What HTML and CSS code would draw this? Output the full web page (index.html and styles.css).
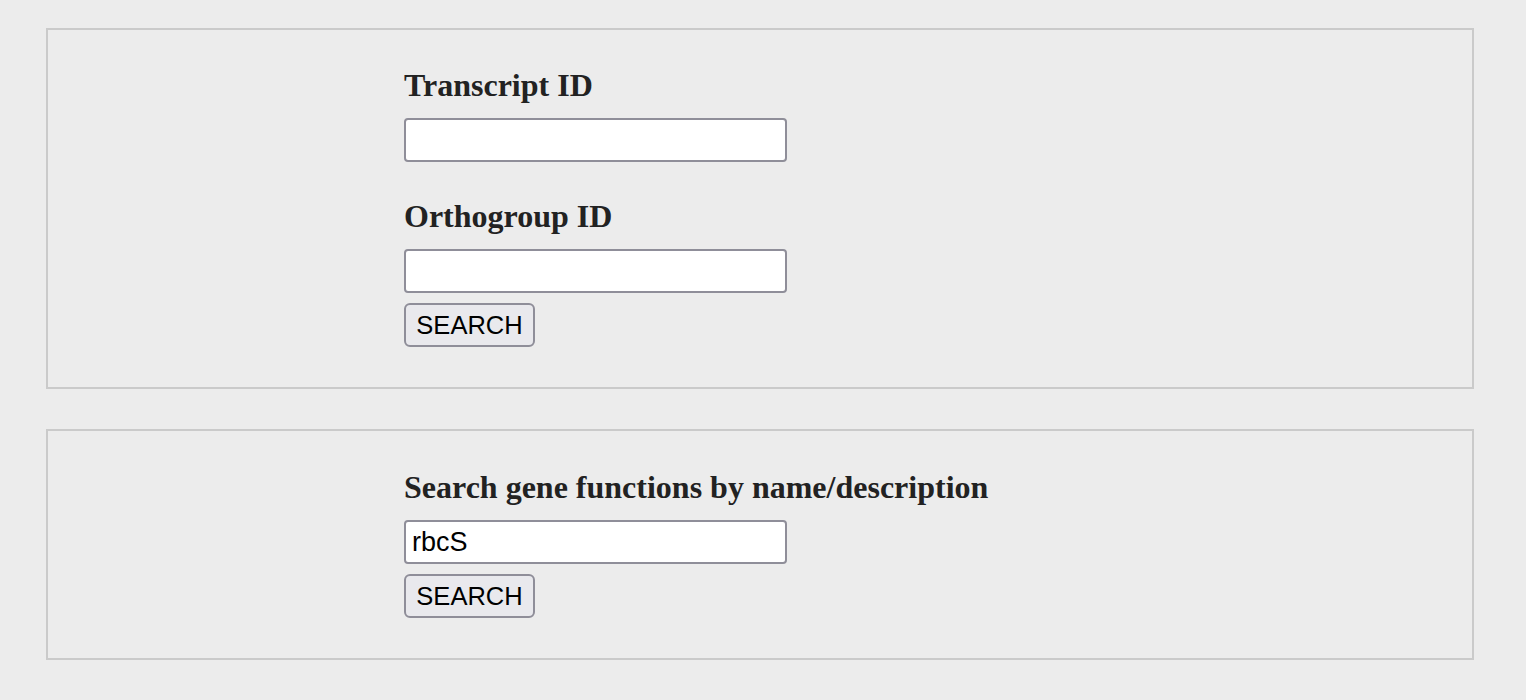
FILE: index.html
```html
<!DOCTYPE html>
<html>
<head>
<meta charset="utf-8">
<link rel="stylesheet" href="styles.css">
</head>
<body>
<form class="panel panel-ids">
  <div class="field">
    <label class="label" for="tid">Transcript ID</label>
    <input class="text-input" id="tid" type="text">
  </div>
  <div class="field">
    <label class="label" for="oid">Orthogroup ID</label>
    <input class="text-input" id="oid" type="text">
  </div>
  <button class="btn" type="button">SEARCH</button>
</form>
<form class="panel panel-func">
  <div class="field">
    <label class="label" for="q">Search gene functions by name/description</label>
    <input class="text-input" id="q" type="text" value="rbcS">
  </div>
  <button class="btn" type="button">SEARCH</button>
</form>
</body>
</html>
```
FILE: styles.css
```css
html, body {
  background: #ececec;
}
body {
  margin: 28px 0 0 46px;
  width: 1428px;
  font-family: "Liberation Serif", "Times New Roman", serif;
  color: #222222;
}
.panel {
  box-sizing: border-box;
  width: 1428px;
  border: 2px solid #cacaca;
  padding: 37px 0 40px 356px;
  margin: 0 0 40px 0;
  display: flex;
  flex-direction: column;
  align-items: flex-start;
}
.panel-func {
  padding-top: 38px;
}
.field {
  display: flex;
  flex-direction: column;
  align-items: flex-start;
}
.field + .field {
  margin-top: 36px;
}
.label {
  font-family: "Liberation Serif", "Times New Roman", serif;
  font-weight: bold;
  font-size: 32px;
  line-height: 36px;
  margin-bottom: 15px;
  color: #222222;
}
.text-input {
  box-sizing: border-box;
  width: 383px;
  height: 44px;
  margin: 0;
  border: 2px solid #8f8e99;
  border-radius: 4px;
  background: #ffffff;
  padding: 0 6px;
  font-family: "Liberation Sans", Arial, sans-serif;
  font-size: 27px;
  color: #000000;
  outline: none;
}
.btn {
  box-sizing: border-box;
  margin-top: 10px;
  height: 44px;
  width: 131px;
  padding: 0;
  border: 2px solid #8f8e99;
  border-radius: 6px;
  background: #e9e9ed;
  font-family: "Liberation Sans", Arial, sans-serif;
  font-size: 25.5px;
  color: #000000;
  line-height: 40px;
  text-align: center;
}
```
